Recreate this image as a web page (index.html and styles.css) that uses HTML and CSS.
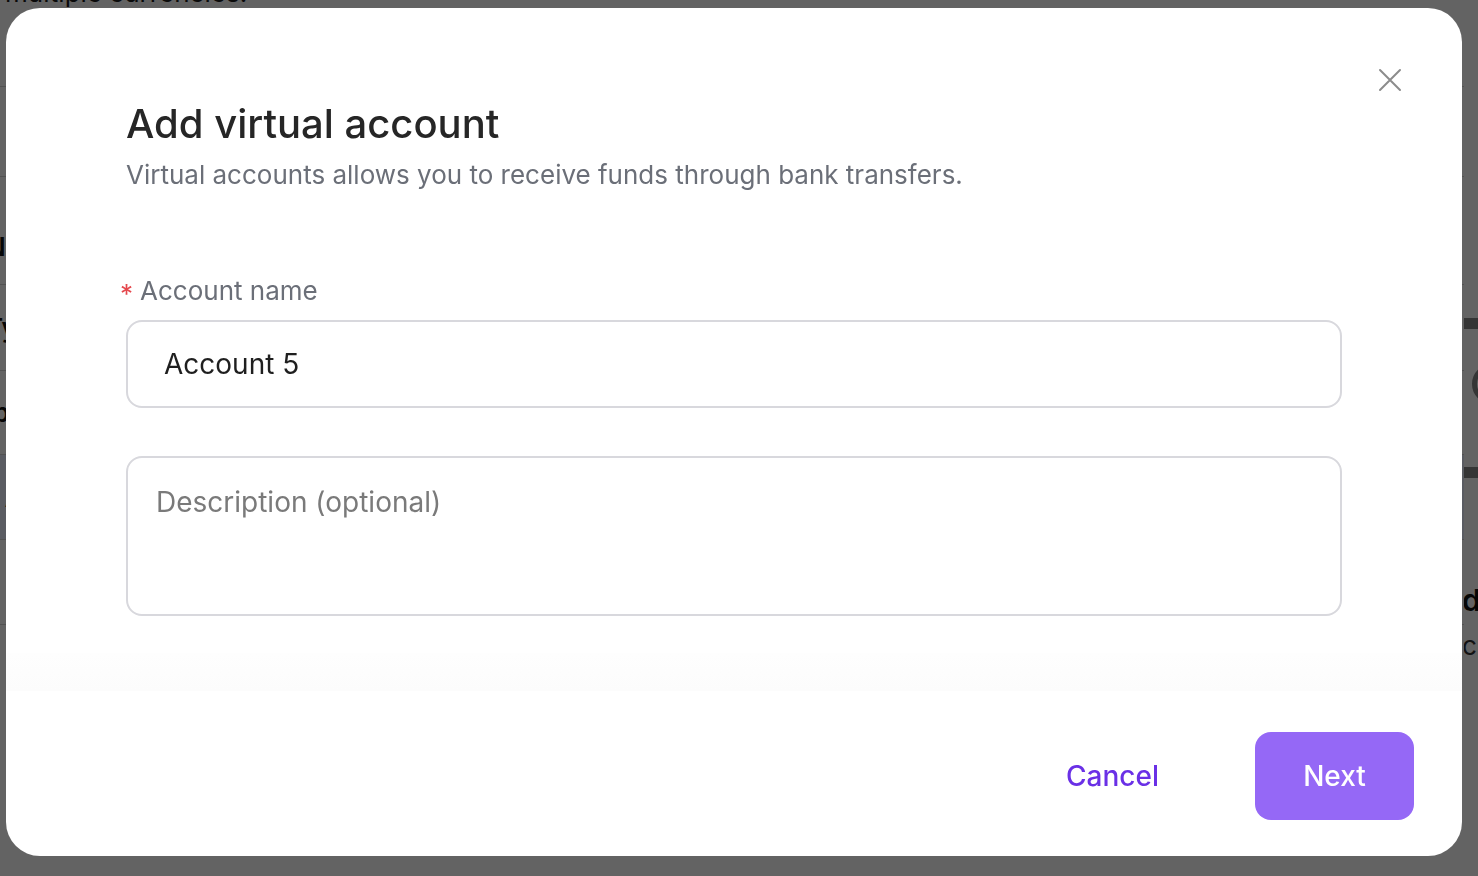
FILE: index.html
```html
<!DOCTYPE html>
<html lang="en">
<head>
<meta charset="utf-8">
<title>Add virtual account</title>
<link rel="stylesheet" href="styles.css">
</head>
<body>
<div class="page">
  <div class="page-main">
    <p class="page-intro">multiple currencies.</p>
    <div class="rows">
      <div class="row row-head"></div>
      <div class="row"></div>
      <div class="row">Name</div>
      <div class="row">Type</div>
      <div class="row">Iban:</div>
      <div class="row row-selected">- Account 4</div>
      <div class="row"></div>
    </div>
  </div>
  <div class="page-side">
    <div class="side-card"><span class="side-ring"></span></div>
    <div class="side-title">details</div>
    <div class="side-text">currency</div>
  </div>
</div>

<div class="overlay">
  <div class="modal" role="dialog" aria-labelledby="modal-title">
    <button class="close" type="button" aria-label="Close">
      <svg viewBox="0 0 24 24" width="24" height="24" aria-hidden="true">
        <path d="M2 2 L22 22 M22 2 L2 22" fill="none" stroke="#8c8c8c" stroke-width="2" stroke-linecap="round"/>
      </svg>
    </button>
    <div class="modal-body">
      <h2 class="title" id="modal-title">Add virtual account</h2>
      <p class="subtitle">Virtual accounts allows you to receive funds through bank transfers.</p>
      <form class="form">
        <label class="label" for="acc-name"><span class="req">*</span>Account name</label>
        <input class="input" id="acc-name" type="text" value="Account 5">
        <textarea class="textarea" placeholder="Description (optional)"></textarea>
      </form>
    </div>
    <div class="fade"></div>
    <div class="footer">
      <button class="btn btn-cancel" type="button">Cancel</button>
      <button class="btn btn-next" type="button">Next</button>
    </div>
  </div>
</div>
</body>
</html>
```

FILE: styles.css
```css
* { box-sizing: border-box; }

html, body {
  margin: 0;
  height: 100%;
}

body {
  font-family: Inter, "Noto Sans", "Liberation Sans", sans-serif;
  background: #ffffff;
  color: #222222;
  overflow: hidden;
}

/* ---------- background page ---------- */
.page {
  display: flex;
  height: 876px;
}

.page-main {
  flex: 1;
  position: relative;
}

.page-intro {
  margin: -24px 0 0 5px;
  font-size: 26px;
  line-height: 34px;
  color: #1a1a1a;
  white-space: nowrap;
}

.rows {
  margin-top: 0;
}

.row {
  font-size: 26px;
  font-weight: 600;
  color: #111;
  border-bottom: 1px solid #d4d4d4;
  display: flex;
  align-items: center;
  text-indent: -14px;
}

.row:nth-child(1) { height: 77px; }
.row:nth-child(2) { height: 90px; }
.row:nth-child(3) { height: 108px; align-items: flex-end; padding-bottom: 22px; }
.row:nth-child(4) { height: 86px; }
.row:nth-child(5) { height: 84px; }
.row-selected { background: #e8eefb; height: 85px; }
.row:nth-child(7) { height: 85px; }

.page-side {
  width: 14px;
  padding-top: 318px;
  overflow: hidden;
}

.side-card {
  width: 300px;
  height: 160px;
  border-top: 11px solid #888888;
  border-bottom: 11px solid #888888;
  display: flex;
  align-items: center;
}

.side-ring {
  display: block;
  width: 40px;
  height: 40px;
  border-radius: 50%;
  border: 5px solid #888;
  margin-left: 8px;
  margin-top: -28px;
}

.side-title {
  margin-top: 104px;
  font-size: 30px;
  font-weight: 600;
  color: #111;
  white-space: nowrap;
  margin-left: -2px;
}

.side-text {
  margin-top: 12px;
  font-size: 26px;
  color: #333;
  white-space: nowrap;
  margin-left: -2px;
}

/* ---------- overlay & modal ---------- */
.overlay {
  position: fixed;
  inset: 0;
  background: rgba(0, 0, 0, 0.61);
  display: flex;
  padding: 8px 16px 20px 6px;
}

.modal {
  position: relative;
  flex: 1;
  background: #ffffff;
  border-radius: 34px;
  display: flex;
  flex-direction: column;
  overflow: hidden;
}

.close {
  position: absolute;
  top: 60px;
  right: 60px;
  width: 24px;
  height: 24px;
  padding: 0;
  border: 0;
  background: transparent;
  cursor: pointer;
  display: flex;
}

.modal-body {
  padding: 92px 120px 0 120px;
}

.title {
  margin: 0;
  font-size: 40px;
  line-height: 48px;
  font-weight: 500;
  color: #262626;
}

.subtitle {
  margin: 11px 0 0 0;
  font-size: 26px;
  line-height: 32px;
  color: #6b6f78;
}

.form {
  display: flex;
  flex-direction: column;
  margin-top: 83px;
}

.label {
  display: flex;
  align-items: center;
  margin-left: -6px;
  font-size: 26px;
  line-height: 34px;
  color: #6b6f78;
}

.req {
  color: #e5484d;
  font-size: 26px;
  margin-right: 7px;
  position: relative;
  top: 3px;
}

.input {
  margin-top: 12px;
  height: 88px;
  border: 2px solid #d8d8dd;
  border-radius: 16px;
  padding: 0 36px;
  font-family: inherit;
  font-size: 28px;
  color: #1f1f1f;
  background: #fff;
  outline: none;
}

.textarea {
  margin-top: 48px;
  height: 160px;
  border: 2px solid #d8d8dd;
  border-radius: 16px;
  padding: 23px 28px;
  font-family: inherit;
  font-size: 28px;
  line-height: 42px;
  color: #1f1f1f;
  background: #fff;
  resize: none;
  outline: none;
}

.textarea::placeholder {
  color: #7a7a7a;
}

.fade {
  height: 38px;
  margin-top: 37px;
  background: linear-gradient(#fefefe, #fcfcfc);
}

.footer {
  margin-top: auto;
  display: flex;
  justify-content: flex-end;
  align-items: center;
  gap: 62px;
  padding: 0 48px 36px 0;
}

.btn {
  height: 88px;
  border-radius: 16px;
  border: 0;
  font-family: inherit;
  font-size: 28px;
  font-weight: 500;
  cursor: pointer;
}

.btn-cancel {
  background: transparent;
  color: #6a30e6;
  padding: 0 34px;
}

.btn-next {
  width: 159px;
  background: #9568f6;
  color: #ffffff;
}
```
